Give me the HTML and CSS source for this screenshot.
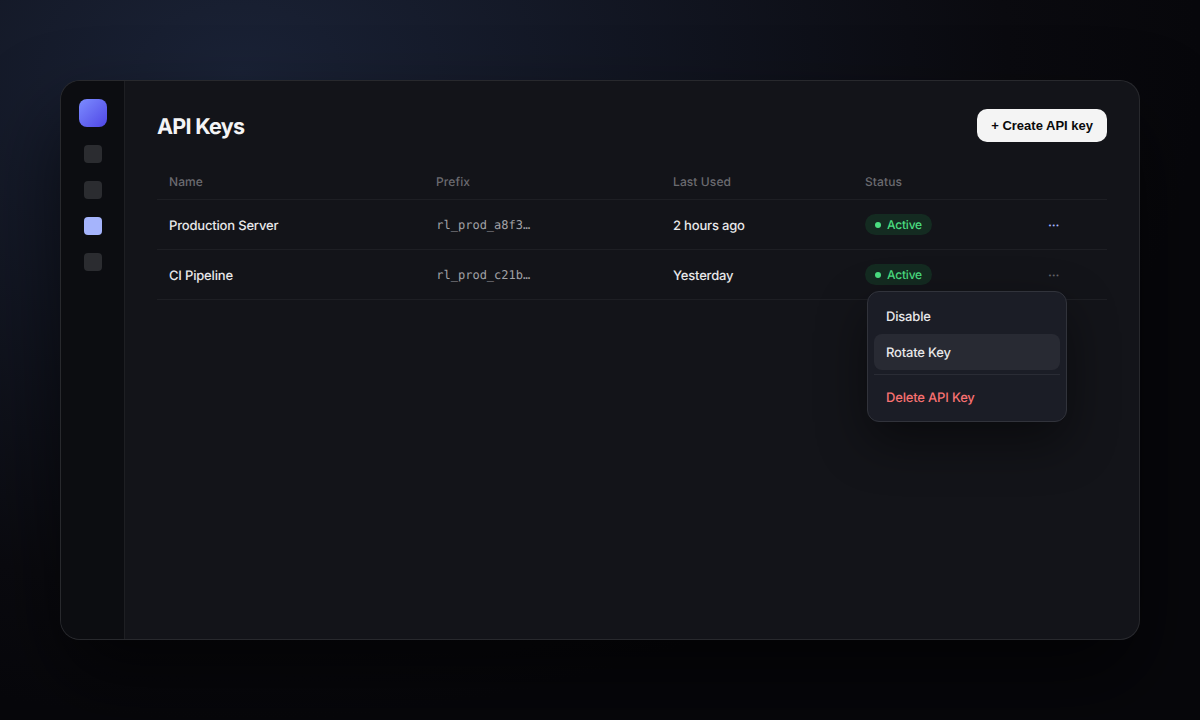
FILE: index.html
```html
<!DOCTYPE html>
<html lang="en">
<head>
<meta charset="utf-8">
<title>API Keys</title>
<link rel="stylesheet" href="styles.css">
</head>
<body>
<div class="window">
  <aside class="sidebar">
    <div class="logo"></div>
    <nav class="nav"><i></i><i></i><i class="current"></i><i></i></nav>
  </aside>
  <main class="main">
    <header class="header">
      <h1>API Keys</h1>
      <button class="create">+ Create API key</button>
    </header>
    <div class="table">
      <div class="row head"><span>Name</span><span>Prefix</span><span>Last Used</span><span>Status</span><span></span></div>
      <div class="row"><span class="text">Production Server</span><span class="mono">rl_prod_a8f3…</span><span class="text">2 hours ago</span><span class="status"><b class="badge"><i></i>Active</b></span><span class="more lit">···</span></div>
      <div class="row"><span class="text">CI Pipeline</span><span class="mono">rl_prod_c21b…</span><span class="text">Yesterday</span><span class="status"><b class="badge"><i></i>Active</b></span><span class="more">···</span></div>
    </div>
    <div class="menu">
      <div class="item">Disable</div>
      <div class="item hover">Rotate Key</div>
      <hr>
      <div class="item danger">Delete API Key</div>
    </div>
  </main>
</div>
</body>
</html>
```
FILE: styles.css
```css
* { box-sizing: border-box; }
body {
  margin: 0; height: 720px; overflow: hidden; padding: 80px 60px;
  font: 500 13px/20px Inter, sans-serif; letter-spacing: -.18px; color: #e8e8ea; text-rendering: geometricPrecision;
  background: radial-gradient(ellipse 80% 90% at 20% 10%, #1a2236 0%, #0a0a0f 80%, #07070b 100%);
}
.window {
  position: relative; display: flex; height: 560px; overflow: hidden;
  border: 1px solid rgba(255,255,255,.09); border-radius: 20px;
  background: #131419; box-shadow: 0 40px 80px rgba(0,0,0,.6);
}
.sidebar { width: 64px; padding-top: 18px; background: #0c0d11; border-right: 1px solid #1e1f23; display: flex; flex-direction: column; align-items: center; gap: 18px; }
.logo { width: 28px; height: 28px; border-radius: 8px; background: linear-gradient(135deg, #7c8cff, #4f46e5); }
.nav { display: flex; flex-direction: column; gap: 18px; }
.nav i { width: 18px; height: 18px; border-radius: 4px; background: #2b2c30; }
.nav .current { background: #a5b4fc; }
.main { flex: 1; padding: 28px 32px; }
.header { display: flex; align-items: center; justify-content: space-between; height: 33px; margin-bottom: 22px; }
h1 { margin: 0; padding-top: 4px; font-size: 21.5px; line-height: 33px; font-weight: 650; letter-spacing: -.72px; color: #f4f4f5; }
.create { height: 33px; padding: 0 14px; border: 0; border-radius: 10px; background: #f4f4f4; color: #09090b; letter-spacing: 0; font: bold 13px "Liberation Sans", Arial, sans-serif; }
.row { display: grid; grid-template-columns: 267px 237px 192px 183px 1fr; height: 50px; align-items: center; border-bottom: 1px solid #1e1f24; }
.row > span { padding: 0 12px; }
.row > .text { padding-top: 2px; }
.head { height: 36px; font-size: 12px; letter-spacing: .1px; color: #6b6b70; }
.row > .mono { padding-left: 12.3px; font: 12px/18px "DejaVu Sans Mono", monospace; letter-spacing: 0; color: #a1a1a6; }
.status { display: flex; }
.badge { display: flex; align-items: center; gap: 6px; width: 67px; height: 21px; padding: 0 10px; border-radius: 11px; background: #142b21; color: #4ade80; font-size: 12px; font-weight: 450; }
.badge i { width: 6px; height: 6px; border-radius: 50%; background: #4ade80; }
.row > .more { padding-top: 3px; color: #63646b; letter-spacing: -.2px; }
.row > .lit { color: #a5b4fc; }
.menu { position: absolute; left: 806px; top: 210px; width: 200px; height: 131px; padding: 6px; border: 1px solid #31333b; border-radius: 12px; background: #1b1d26; box-shadow: 0 20px 50px rgba(0,0,0,.45); }
.item { height: 36px; line-height: 34px; padding: 2px 12px 0; border-radius: 8px; }
.hover { background: #282a33; }
.danger { color: #f87171; font-weight: 450; letter-spacing: -.18px; }
hr { height: 1px; margin: 4px 0; border: 0; background: #2a2c35; }
```
